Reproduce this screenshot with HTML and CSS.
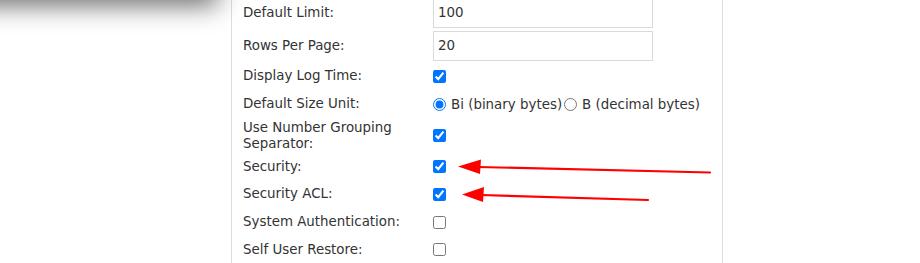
FILE: index.html
```html
<!DOCTYPE html>
<html lang="en">
<head>
    <meta charset="UTF-8">
    <title>Settings</title>
    <link rel="stylesheet" href="styles.css">
</head>
<body>
<div class="menushadow"></div>
<div class="panel">
    <div class="row">
        <label class="lbl">Default Limit:</label>
        <div class="val"><input class="txt" type="text" value="100"></div>
    </div>
    <div class="row">
        <label class="lbl">Rows Per Page:</label>
        <div class="val"><input class="txt" type="text" value="20"></div>
    </div>
    <div class="row">
        <label class="lbl">Display Log Time:</label>
        <div class="val"><input type="checkbox" checked></div>
    </div>
    <div class="row">
        <label class="lbl">Default Size Unit:</label>
        <div class="val">
            <input type="radio" name="unit" checked><span class="opt">Bi (binary bytes)</span>
            <input type="radio" name="unit"><span class="opt">B (decimal bytes)</span>
        </div>
    </div>
    <div class="row">
        <label class="lbl">Use Number Grouping Separator:</label>
        <div class="val"><input type="checkbox" checked></div>
    </div>
    <div class="row">
        <label class="lbl">Security:</label>
        <div class="val"><input type="checkbox" checked></div>
    </div>
    <div class="row">
        <label class="lbl">Security ACL:</label>
        <div class="val"><input type="checkbox" checked></div>
    </div>
    <div class="row">
        <label class="lbl">System Authentication:</label>
        <div class="val"><input type="checkbox"></div>
    </div>
    <div class="row">
        <label class="lbl">Self User Restore:</label>
        <div class="val"><input type="checkbox"></div>
    </div>
</div>
<!-- red arrows drawn over the form -->
<svg class="arrows" width="920" height="263" viewBox="0 0 920 263">
    <g stroke="#f00" stroke-width="2.2" fill="none" stroke-linecap="round">
        <line x1="478" y1="167" x2="710" y2="172.5"/>
        <line x1="481" y1="195" x2="648" y2="200"/>
    </g>
    <g fill="#f00">
        <polygon points="458,166.5 481,159.5 480,174"/>
        <polygon points="462,194.5 484,187 483,202"/>
    </g>
</svg>
</body>
</html>
```

FILE: styles.css
```css
*{
    box-sizing: border-box;
}
body{
    margin: 0;
    background: #fff;
    font-family: "DejaVu Sans", Verdana, sans-serif;
    font-size: 13.4px;
    color: #333;
    overflow: hidden;
}
.menushadow{
    position: absolute;
    top: -34px;
    left: -40px;
    width: 258px;
    height: 30px;
    background: #fff;
    box-shadow: 0 9px 26px rgba(0,0,0,0.6);
}
.panel{
    width: 492px;
    margin-left: 231px;
    margin-top: -4px;
    padding: 0 11px;
    min-height: 280px;
    border-left: 1px solid #dedede;
    border-right: 1px solid #dedede;
}
.row{
    display: flex;
    align-items: center;
    min-height: 28px;
    padding: 1.5px 0;
}
.row:nth-child(n+6){
    margin-top: -0.3px;
}
.lbl{
    width: 190px;
    flex: none;
    line-height: 16px;
    padding-right: 20px;
}
.val{
    display: flex;
    align-items: center;
}
.txt{
    width: 220px;
    height: 30px;
    padding: 0 4px;
    border: 1px solid #dadada;
    font-family: "DejaVu Sans", Verdana, sans-serif;
    font-size: 13.4px;
    color: #333;
    outline: none;
}
input[type=checkbox], input[type=radio]{
    margin: 0;
    width: 13px;
    height: 13px;
}
.opt{
    margin: 0 2px 0 5px;
}
.arrows{
    position: absolute;
    top: 0;
    left: 0;
    pointer-events: none;
}
```
